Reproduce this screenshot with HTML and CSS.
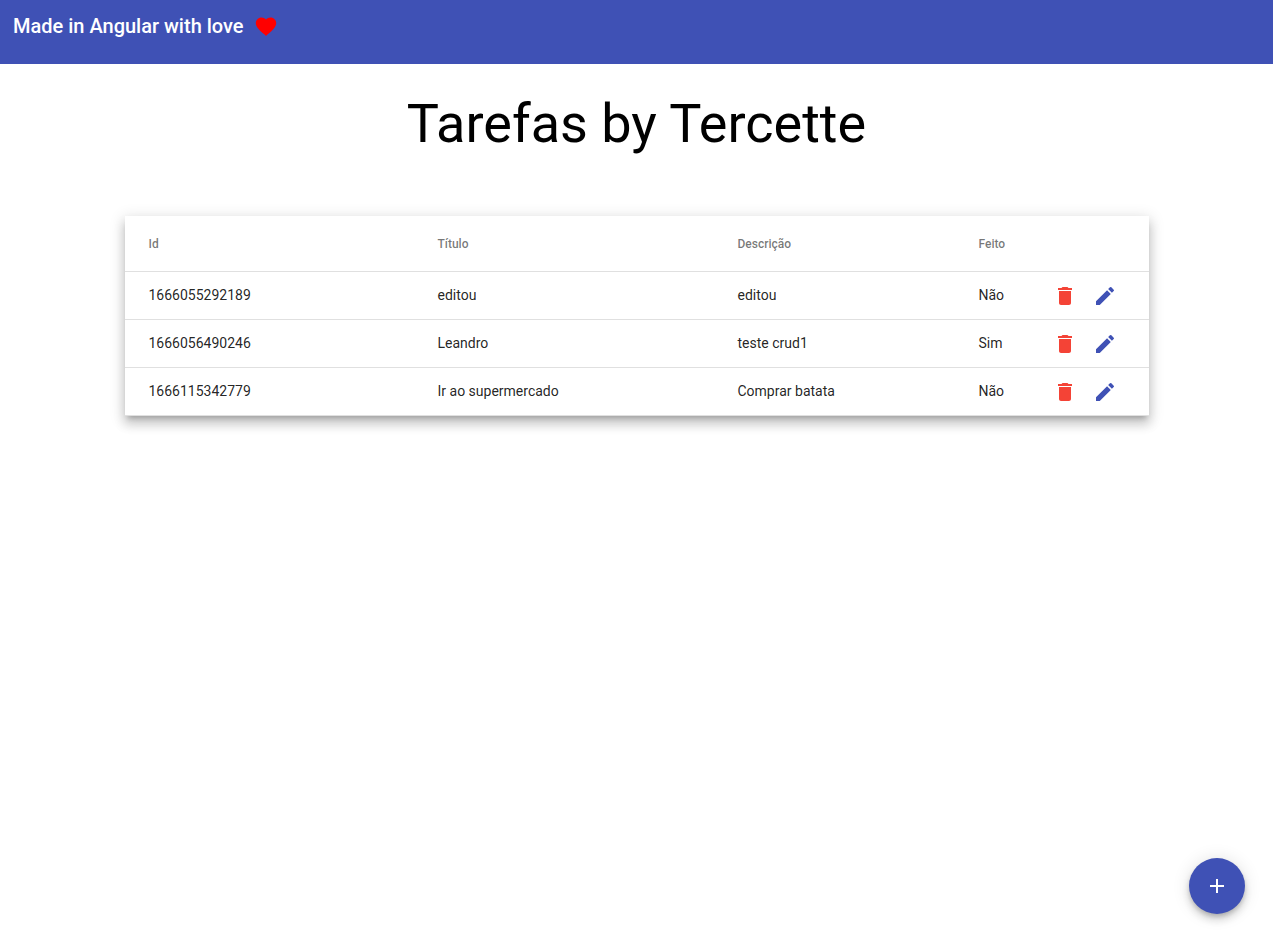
FILE: index.html
```html
<!DOCTYPE html>
<html lang="pt-BR">
<head>
  <meta charset="utf-8">
  <meta name="viewport" content="width=device-width, initial-scale=1">
  <title>Tarefas by Tercette</title>
  <link rel="stylesheet" href="styles.css">
</head>
<body>
  <svg class="sprite" aria-hidden="true">
    <symbol id="trash" viewBox="0 0 24 24"><path d="M6 19c0 1.1.9 2 2 2h8c1.100 0 2-.9 2-2V7H6v12zM19 4h-3.500l-1-1h-5l-1 1H5v2h14V4z"/></symbol>
    <symbol id="pencil" viewBox="0 0 24 24"><path d="M3 17.250V21h3.750L17.810 9.940l-3.750-3.750L3 17.250zM20.710 7.040a1 1 0 0 0 0-1.410l-2.340-2.340a1 1 0 0 0-1.410 0l-1.830 1.830 3.750 3.750 1.830-1.830z"/></symbol>
  </svg>
  <header class="toolbar">
    <span class="toolbar-title">Made in Angular with love</span>
    <svg class="icon heart" viewBox="0 0 24 24" aria-hidden="true"><path d="M12 22l-1.450-1.400C5.200 16 1.800 12.900 1.800 9 1.800 5.900 4.300 3.400 7.500 3.400c1.740 0 3.410.81 4.500 2.090 1.090-1.280 2.760-2.090 4.500-2.090 3.200 0 5.700 2.500 5.700 5.600 0 3.900-3.400 7-8.750 11.600L12 22z"/></svg>
  </header>
  <main class="page">
    <h1 class="heading">Tarefas by Tercette</h1>
    <table class="tasks">
      <colgroup>
        <col class="col-id"><col class="col-title"><col class="col-description"><col class="col-done"><col class="col-actions">
      </colgroup>
      <thead>
        <tr><th scope="col">Id</th><th scope="col">Título</th><th scope="col">Descrição</th><th scope="col">Feito</th><td></td></tr>
      </thead>
      <tbody>
        <tr>
          <td>1666055292189</td><td>editou</td><td>editou</td><td>Não</td>
          <td><div class="actions"><button class="action remove" type="button" aria-label="Excluir"><svg class="icon"><use href="#trash"/></svg></button><button class="action edit" type="button" aria-label="Editar"><svg class="icon"><use href="#pencil"/></svg></button></div></td>
        </tr>
        <tr>
          <td>1666056490246</td><td>Leandro</td><td>teste crud1</td><td>Sim</td>
          <td><div class="actions"><button class="action remove" type="button" aria-label="Excluir"><svg class="icon"><use href="#trash"/></svg></button><button class="action edit" type="button" aria-label="Editar"><svg class="icon"><use href="#pencil"/></svg></button></div></td>
        </tr>
        <tr>
          <td>1666115342779</td><td>Ir ao supermercado</td><td>Comprar batata</td><td>Não</td>
          <td><div class="actions"><button class="action remove" type="button" aria-label="Excluir"><svg class="icon"><use href="#trash"/></svg></button><button class="action edit" type="button" aria-label="Editar"><svg class="icon"><use href="#pencil"/></svg></button></div></td>
        </tr>
      </tbody>
    </table>
  </main>
  <button class="fab" type="button" aria-label="Adicionar tarefa">
    <svg class="icon" viewBox="0 0 24 24" aria-hidden="true"><path d="M19 13h-6v6h-2v-6H5v-2h6V5h2v6h6v2z"/></svg>
  </button>
</body>
</html>
```

FILE: styles.css
```css
* {
  box-sizing: border-box;
}

body {
  min-height: 100vh;
  margin: 0;
  background: #fff;
  color: #000;
  font-family: Roboto, "Liberation Sans", sans-serif;
}

.sprite {
  display: none;
}

.icon {
  display: block;
  width: 24px;
  height: 24px;
  fill: currentColor;
}

.toolbar {
  display: flex;
  align-items: flex-start;
  gap: 10px;
  min-height: 64px;
  padding: 14px 13px;
  background: #3f51b5;
  color: #fff;
}

.toolbar-title {
  font-size: 20px;
  font-weight: 500;
  line-height: 24px;
}

.heart {
  color: #f00;
}

.page {
  max-width: 1024px;
  margin: 0 auto;
  padding: 32px 0;
}

.heading {
  margin: 0 0 64px;
  font-size: 54px;
  font-weight: 400;
  line-height: 56px;
  text-align: center;
}

.tasks {
  width: 100%;
  table-layout: fixed;
  border-spacing: 0;
  background: #fff;
  box-shadow: 0 5px 5px -3px rgba(0, 0, 0, 0.2), 0 8px 10px 1px rgba(0, 0, 0, 0.14), 0 3px 14px 2px rgba(0, 0, 0, 0.12);
}

.col-id {
  width: 313px;
}

.col-title {
  width: 300px;
}

.col-description {
  width: 241px;
}

.col-done {
  width: 66px;
}

.tasks th,
.tasks td {
  padding: 0;
  border-bottom: 1px solid #e0e0e0;
  text-align: left;
}

.tasks th {
  height: 56px;
  color: rgba(0, 0, 0, 0.54);
  font-size: 12px;
  font-weight: 500;
}

.tasks td {
  height: 48px;
  padding-bottom: 2px;
  color: rgba(0, 0, 0, 0.87);
  font-size: 14px;
}

.tasks td:last-child {
  padding-bottom: 0;
}

.tasks th:first-child,
.tasks td:first-child {
  padding-left: 24px;
}

.actions {
  display: flex;
}

.action {
  display: grid;
  place-items: center;
  width: 40px;
  height: 40px;
  padding: 0;
  border: 0;
  border-radius: 50%;
  background: transparent;
  cursor: pointer;
}

.remove {
  color: #f44336;
}

.edit {
  color: #3f51b5;
}

.fab {
  position: fixed;
  right: 28px;
  bottom: 29px;
  display: grid;
  place-items: center;
  width: 56px;
  height: 56px;
  padding: 0;
  border: 0;
  border-radius: 50%;
  background: #3f51b5;
  color: #fff;
  box-shadow: 0 3px 5px -1px rgba(0, 0, 0, 0.2), 0 6px 10px 0 rgba(0, 0, 0, 0.14), 0 1px 18px 0 rgba(0, 0, 0, 0.12);
  cursor: pointer;
}
```
